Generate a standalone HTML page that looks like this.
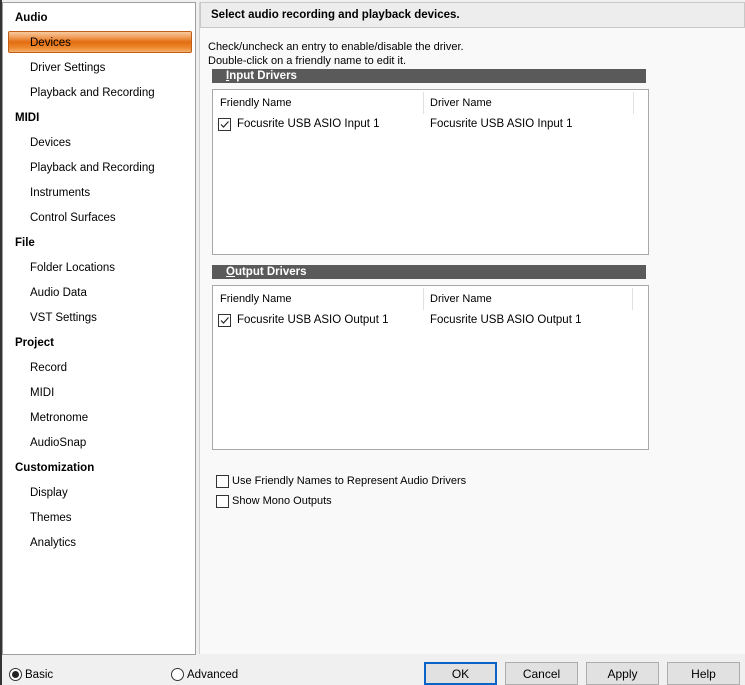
<!DOCTYPE html>
<html><head><style>
body{margin:0;width:745px;height:685px;background:#f0f0f0;font-family:"Liberation Sans",sans-serif;font-size:11.5px;color:#000;position:relative;overflow:hidden}
.a{position:absolute;white-space:nowrap}
#left{left:2px;top:2px;width:192px;height:651px;background:#fff;border:1px solid #a0a0a0}
.h{font-weight:bold;left:15px}
.i{left:30px}
#sel{left:8px;top:31px;width:184px;height:22px;border-radius:2px;background:linear-gradient(#f8c89a 0%,#f0a060 25%,#e36d10 50%,#ee8a30 80%,#f3b070 100%);border:1px solid #c06018;box-sizing:border-box}
#right{left:199px;top:2px;width:546px;height:652px;background:#f9f9f9;border-left:1px solid #d0d0d0}
#hdr{left:200px;top:2px;width:545px;height:26px;background:#ededed;border:1px solid #c8c8c8;box-sizing:border-box}
.bar{background:#5a5a5a;color:#fff;font-weight:bold;height:14px;line-height:14px;padding-left:14px;width:420px;left:212px}
.box{left:212px;width:435px;background:#fff;border:1px solid #a8a8a8}
.cb{width:11px;height:11px;border:1px solid #333;background:#fff}
.btn{top:662px;height:21px;width:71px;background:#e1e1e1;border:1px solid #adadad;text-align:center;line-height:22px;font-size:12px}
.vl{width:1px;background:#e0e0e0}
</style></head><body>
<div class="a" style="left:0;top:0;width:2px;height:685px;background:#333"></div>
<div class="a" id="left"></div>
<div class="a" id="sel"></div>
<div class="a h" style="top:12px">Audio</div>
<div class="a i" style="top:37px">Devices</div>
<div class="a i" style="top:62px">Driver Settings</div>
<div class="a i" style="top:87px">Playback and Recording</div>
<div class="a h" style="top:112px">MIDI</div>
<div class="a i" style="top:137px">Devices</div>
<div class="a i" style="top:162px">Playback and Recording</div>
<div class="a i" style="top:187px">Instruments</div>
<div class="a i" style="top:212px">Control Surfaces</div>
<div class="a h" style="top:237px">File</div>
<div class="a i" style="top:262px">Folder Locations</div>
<div class="a i" style="top:287px">Audio Data</div>
<div class="a i" style="top:312px">VST Settings</div>
<div class="a h" style="top:337px">Project</div>
<div class="a i" style="top:362px">Record</div>
<div class="a i" style="top:387px">MIDI</div>
<div class="a i" style="top:412px">Metronome</div>
<div class="a i" style="top:437px">AudioSnap</div>
<div class="a h" style="top:462px">Customization</div>
<div class="a i" style="top:487px">Display</div>
<div class="a i" style="top:512px">Themes</div>
<div class="a i" style="top:537px">Analytics</div>

<div class="a" id="right"></div>
<div class="a" id="hdr"></div>
<div class="a" style="left:211px;top:9px;font-weight:bold">Select audio recording and playback devices.</div>
<div class="a" style="left:208px;top:41px;font-size:11px">Check/uncheck an entry to enable/disable the driver.</div>
<div class="a" style="left:208px;top:55px;font-size:11px">Double-click on a friendly name to edit it.</div>

<div class="a bar" style="top:69px"><u>I</u>nput Drivers</div>
<div class="a box" style="top:89px;height:164px"></div>
<div class="a vl" style="left:423px;top:92px;height:22px"></div>
<div class="a vl" style="left:633px;top:92px;height:22px"></div>
<div class="a" style="left:220px;top:97px;font-size:11px">Friendly Name</div>
<div class="a" style="left:430px;top:97px;font-size:11px">Driver Name</div>
<div class="a cb" style="left:218px;top:118px"></div>
<svg class="a" style="left:219px;top:119px" width="11" height="11"><path d="M2 5.5L4.5 8L9.5 2.5" stroke="#222" stroke-width="1.2" fill="none"/></svg>
<div class="a" style="left:237px;top:118px">Focusrite USB ASIO Input 1</div>
<div class="a" style="left:430px;top:118px">Focusrite USB ASIO Input 1</div>

<div class="a bar" style="top:265px"><u>O</u>utput Drivers</div>
<div class="a box" style="top:285px;height:163px"></div>
<div class="a vl" style="left:423px;top:288px;height:22px"></div>
<div class="a vl" style="left:632px;top:288px;height:22px"></div>
<div class="a" style="left:220px;top:293px;font-size:11px">Friendly Name</div>
<div class="a" style="left:430px;top:293px;font-size:11px">Driver Name</div>
<div class="a cb" style="left:218px;top:314px"></div>
<svg class="a" style="left:219px;top:315px" width="11" height="11"><path d="M2 5.5L4.5 8L9.5 2.5" stroke="#222" stroke-width="1.2" fill="none"/></svg>
<div class="a" style="left:237px;top:314px">Focusrite USB ASIO Output 1</div>
<div class="a" style="left:430px;top:314px">Focusrite USB ASIO Output 1</div>

<div class="a cb" style="left:216px;top:475px"></div>
<div class="a" style="left:232px;top:475px;font-size:11px">Use Friendly Names to Represent Audio Drivers</div>
<div class="a cb" style="left:216px;top:495px"></div>
<div class="a" style="left:232px;top:495px;font-size:11px">Show Mono Outputs</div>

<div class="a" style="left:9px;top:668px;width:11px;height:11px;border:1px solid #333;border-radius:50%;background:#fff"></div>
<div class="a" style="left:12px;top:671px;width:7px;height:7px;border-radius:50%;background:#222"></div>
<div class="a" style="left:25px;top:669px;font-size:11.5px">Basic</div>
<div class="a" style="left:171px;top:668px;width:11px;height:11px;border:1px solid #333;border-radius:50%;background:#fff"></div>
<div class="a" style="left:187px;top:669px;font-size:11.5px">Advanced</div>

<div class="a btn" style="left:424px;border:2px solid #0a64c8;height:19px;line-height:20px;width:69px">OK</div>
<div class="a btn" style="left:505px">Cancel</div>
<div class="a btn" style="left:586px">Apply</div>
<div class="a btn" style="left:667px">Help</div>
</body></html>
